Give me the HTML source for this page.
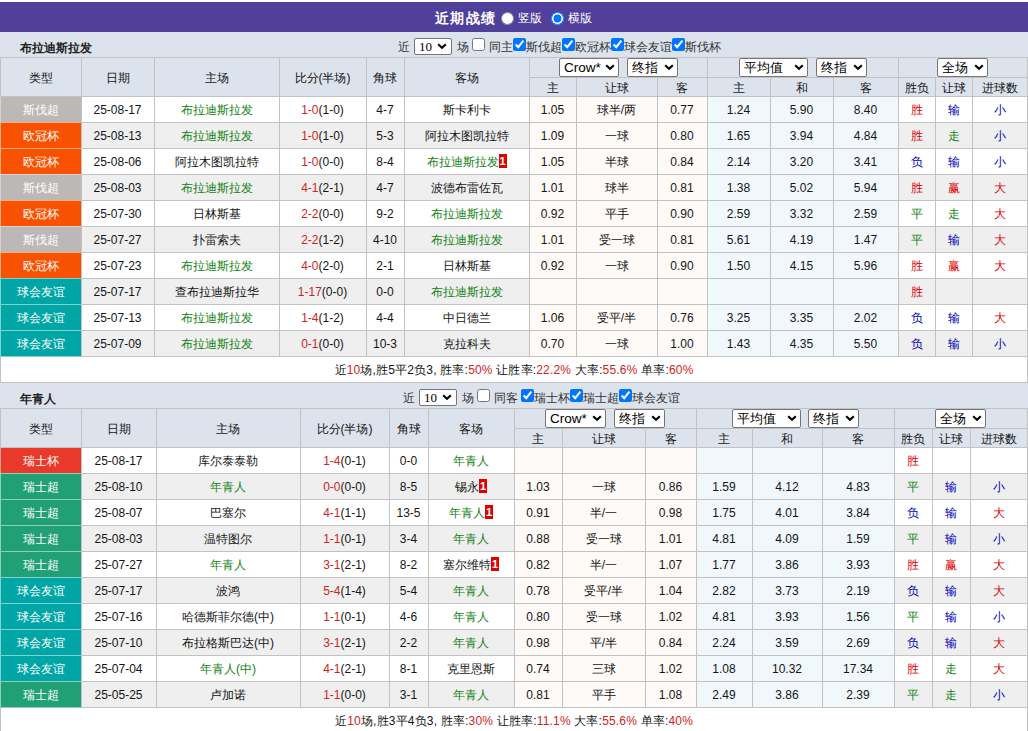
<!DOCTYPE html>
<html><head><meta charset="utf-8"><style>
html,body{margin:0;padding:0;background:#fff;width:1028px;height:731px;overflow:hidden;position:relative}
body *{position:absolute;box-sizing:border-box}
body{font-family:"Liberation Sans",sans-serif;font-size:12px;color:#333}
.t{text-align:center;white-space:nowrap;padding-top:1px}
.t span{position:static}
.t span.mk{position:relative;top:-2px}
.b{font-weight:bold}
.mk{position:static;display:inline-block;background:#e00000;color:#fff;font-weight:bold;width:8px;height:14px;line-height:14px;font-size:11px;text-align:center;vertical-align:middle}
.sel{background:#fff;border:1px solid #767676;border-radius:2px;color:#000}
.st{left:4px;top:0;white-space:nowrap}
input{margin:0;width:13px;height:13px}
</style></head><body>
<div style="left:0;top:2px;width:1028px;height:30px;background:#50409c"></div>
<div class="t b" style="left:435px;top:2px;height:30px;line-height:30px;font-size:14px;letter-spacing:1.3px;color:#fff;text-align:left">近期战绩</div>
<input type="radio" name="r" style="left:501px;top:12px;width:13px;height:13px">
<div class="t" style="left:518px;top:2px;height:30px;line-height:30px;color:#fff;text-align:left">竖版</div>
<input type="radio" name="r" checked style="left:551px;top:12px;width:13px;height:13px">
<div class="t" style="left:568px;top:2px;height:30px;line-height:30px;color:#fff;text-align:left">横版</div>
<div style="left:0px;top:32px;width:1028px;height:25px;background:#dce3ec;"></div>
<div class="t b" style="left:20px;top:35px;height:25px;line-height:25px;font-size:12px;color:#222;text-align:left">布拉迪斯拉发</div>
<div class="t" style="left:398px;top:39px;height:14px;line-height:14px;text-align:left;color:#333">近</div><div class="sel" style="left:414px;top:38px;width:38px;height:17px"><div class="st" style="top:0px;font-family:'Liberation Serif',serif;font-size:13px;line-height:15px">10</div><svg width="10" height="7" style="right:4px;top:4px"><polyline points="1.2,1.2 5,4.8 8.8,1.2" fill="none" stroke="#000" stroke-width="2.1"/></svg></div><div class="t" style="left:457px;top:39px;height:14px;line-height:14px;text-align:left;color:#333">场</div><input type="checkbox"  style="left:472px;top:38px"><div class="t" style="left:489px;top:39px;height:14px;line-height:14px;text-align:left;color:#333">同主</div><input type="checkbox" checked style="left:513px;top:38px"><div class="t" style="left:526px;top:39px;height:14px;line-height:14px;text-align:left;color:#333">斯伐超</div><input type="checkbox" checked style="left:562px;top:38px"><div class="t" style="left:575px;top:39px;height:14px;line-height:14px;text-align:left;color:#333">欧冠杯</div><input type="checkbox" checked style="left:611px;top:38px"><div class="t" style="left:624px;top:39px;height:14px;line-height:14px;text-align:left;color:#333">球会友谊</div><input type="checkbox" checked style="left:672px;top:38px"><div class="t" style="left:685px;top:39px;height:14px;line-height:14px;text-align:left;color:#333">斯伐杯</div>
<div style="left:0px;top:57px;width:1028px;height:39px;background:#dce3ec;"></div>
<div style="left:0px;top:96px;width:1028px;height:26px;background:#fff;"></div>
<div style="left:529px;top:96px;width:178px;height:26px;background:#fefaf7;"></div>
<div style="left:707px;top:96px;width:191px;height:26px;background:#f0f8fb;"></div>
<div style="left:0px;top:122px;width:1028px;height:26px;background:#efefef;"></div>
<div style="left:529px;top:122px;width:178px;height:26px;background:#fefaf7;"></div>
<div style="left:707px;top:122px;width:191px;height:26px;background:#f0f8fb;"></div>
<div style="left:0px;top:148px;width:1028px;height:26px;background:#fff;"></div>
<div style="left:529px;top:148px;width:178px;height:26px;background:#fefaf7;"></div>
<div style="left:707px;top:148px;width:191px;height:26px;background:#f0f8fb;"></div>
<div style="left:0px;top:174px;width:1028px;height:26px;background:#efefef;"></div>
<div style="left:529px;top:174px;width:178px;height:26px;background:#fefaf7;"></div>
<div style="left:707px;top:174px;width:191px;height:26px;background:#f0f8fb;"></div>
<div style="left:0px;top:200px;width:1028px;height:26px;background:#fff;"></div>
<div style="left:529px;top:200px;width:178px;height:26px;background:#fefaf7;"></div>
<div style="left:707px;top:200px;width:191px;height:26px;background:#f0f8fb;"></div>
<div style="left:0px;top:226px;width:1028px;height:26px;background:#efefef;"></div>
<div style="left:529px;top:226px;width:178px;height:26px;background:#fefaf7;"></div>
<div style="left:707px;top:226px;width:191px;height:26px;background:#f0f8fb;"></div>
<div style="left:0px;top:252px;width:1028px;height:26px;background:#fff;"></div>
<div style="left:529px;top:252px;width:178px;height:26px;background:#fefaf7;"></div>
<div style="left:707px;top:252px;width:191px;height:26px;background:#f0f8fb;"></div>
<div style="left:0px;top:278px;width:1028px;height:26px;background:#efefef;"></div>
<div style="left:529px;top:278px;width:178px;height:26px;background:#fefaf7;"></div>
<div style="left:707px;top:278px;width:191px;height:26px;background:#f0f8fb;"></div>
<div style="left:0px;top:304px;width:1028px;height:26px;background:#fff;"></div>
<div style="left:529px;top:304px;width:178px;height:26px;background:#fefaf7;"></div>
<div style="left:707px;top:304px;width:191px;height:26px;background:#f0f8fb;"></div>
<div style="left:0px;top:330px;width:1028px;height:26px;background:#efefef;"></div>
<div style="left:529px;top:330px;width:178px;height:26px;background:#fefaf7;"></div>
<div style="left:707px;top:330px;width:191px;height:26px;background:#f0f8fb;"></div>
<div style="left:0px;top:356px;width:1028px;height:26px;background:#fff;"></div>
<div style="left:0px;top:57px;width:1028px;height:1px;background:#c2c2c2;"></div>
<div style="left:529px;top:77px;width:499px;height:1px;background:#c2c2c2;"></div>
<div style="left:0px;top:96px;width:1028px;height:1px;background:#c2c2c2;"></div>
<div style="left:0px;top:122px;width:1028px;height:1px;background:#c2c2c2;"></div>
<div style="left:0px;top:148px;width:1028px;height:1px;background:#c2c2c2;"></div>
<div style="left:0px;top:174px;width:1028px;height:1px;background:#c2c2c2;"></div>
<div style="left:0px;top:200px;width:1028px;height:1px;background:#c2c2c2;"></div>
<div style="left:0px;top:226px;width:1028px;height:1px;background:#c2c2c2;"></div>
<div style="left:0px;top:252px;width:1028px;height:1px;background:#c2c2c2;"></div>
<div style="left:0px;top:278px;width:1028px;height:1px;background:#c2c2c2;"></div>
<div style="left:0px;top:304px;width:1028px;height:1px;background:#c2c2c2;"></div>
<div style="left:0px;top:330px;width:1028px;height:1px;background:#c2c2c2;"></div>
<div style="left:0px;top:356px;width:1028px;height:1px;background:#c2c2c2;"></div>
<div style="left:0px;top:382px;width:1028px;height:1px;background:#c2c2c2;"></div>
<div style="left:0px;top:57px;width:1px;height:299px;background:#c2c2c2;"></div>
<div style="left:81px;top:57px;width:1px;height:299px;background:#c2c2c2;"></div>
<div style="left:154px;top:57px;width:1px;height:299px;background:#c2c2c2;"></div>
<div style="left:279px;top:57px;width:1px;height:299px;background:#c2c2c2;"></div>
<div style="left:366px;top:57px;width:1px;height:299px;background:#c2c2c2;"></div>
<div style="left:404px;top:57px;width:1px;height:299px;background:#c2c2c2;"></div>
<div style="left:529px;top:57px;width:1px;height:299px;background:#c2c2c2;"></div>
<div style="left:576px;top:77px;width:1px;height:279px;background:#c2c2c2;"></div>
<div style="left:657px;top:77px;width:1px;height:279px;background:#c2c2c2;"></div>
<div style="left:707px;top:57px;width:1px;height:299px;background:#c2c2c2;"></div>
<div style="left:770px;top:77px;width:1px;height:279px;background:#c2c2c2;"></div>
<div style="left:833px;top:77px;width:1px;height:279px;background:#c2c2c2;"></div>
<div style="left:898px;top:57px;width:1px;height:299px;background:#c2c2c2;"></div>
<div style="left:935px;top:77px;width:1px;height:279px;background:#c2c2c2;"></div>
<div style="left:972px;top:77px;width:1px;height:279px;background:#c2c2c2;"></div>
<div style="left:1027px;top:57px;width:1px;height:299px;background:#c2c2c2;"></div>
<div style="left:0px;top:356px;width:1px;height:27px;background:#c2c2c2;"></div>
<div style="left:1027px;top:356px;width:1px;height:27px;background:#c2c2c2;"></div>
<div class="t" style="left:0px;top:58px;width:81px;height:38px;line-height:38px;color:#151515;font-size:12px;">类型</div>
<div class="t" style="left:81px;top:58px;width:73px;height:38px;line-height:38px;color:#151515;font-size:12px;">日期</div>
<div class="t" style="left:154px;top:58px;width:125px;height:38px;line-height:38px;color:#151515;font-size:12px;">主场</div>
<div class="t" style="left:279px;top:58px;width:87px;height:38px;line-height:38px;color:#151515;font-size:12px;">比分(半场)</div>
<div class="t" style="left:366px;top:58px;width:38px;height:38px;line-height:38px;color:#151515;font-size:12px;">角球</div>
<div class="t" style="left:404px;top:58px;width:125px;height:38px;line-height:38px;color:#151515;font-size:12px;">客场</div>
<div class="t" style="left:529px;top:78px;width:47px;height:18px;line-height:18px;color:#151515;font-size:12px;">主</div>
<div class="t" style="left:576px;top:78px;width:81px;height:18px;line-height:18px;color:#151515;font-size:12px;">让球</div>
<div class="t" style="left:657px;top:78px;width:50px;height:18px;line-height:18px;color:#151515;font-size:12px;">客</div>
<div class="t" style="left:707px;top:78px;width:63px;height:18px;line-height:18px;color:#151515;font-size:12px;">主</div>
<div class="t" style="left:770px;top:78px;width:63px;height:18px;line-height:18px;color:#151515;font-size:12px;">和</div>
<div class="t" style="left:833px;top:78px;width:65px;height:18px;line-height:18px;color:#151515;font-size:12px;">客</div>
<div class="t" style="left:898px;top:78px;width:37px;height:18px;line-height:18px;color:#151515;font-size:12px;">胜负</div>
<div class="t" style="left:935px;top:78px;width:37px;height:18px;line-height:18px;color:#151515;font-size:12px;">让球</div>
<div class="t" style="left:972px;top:78px;width:55px;height:18px;line-height:18px;color:#151515;font-size:12px;">进球数</div>
<div style="left:0px;top:97px;width:81px;height:26px;background:#d6d3d2;"></div>
<div style="left:1px;top:97px;width:80px;height:25px;background:#bcb8b6;"></div>
<div class="t" style="left:0px;top:97px;width:81px;height:25px;line-height:25px;color:#fff;font-size:12px;">斯伐超</div>
<div class="t" style="left:81px;top:97px;width:73px;height:25px;line-height:25px;color:#151515;font-size:12px;">25-08-17</div>
<div class="t" style="left:154px;top:97px;width:125px;height:25px;line-height:25px;color:#151515;font-size:12px;"><span style="color:#138313">布拉迪斯拉发</span></div>
<div class="t" style="left:279px;top:97px;width:87px;height:25px;line-height:25px;color:#151515;font-size:12px;"><span style="color:#d02424">1-0</span>(1-0)</div>
<div class="t" style="left:366px;top:97px;width:38px;height:25px;line-height:25px;color:#151515;font-size:12px;">4-7</div>
<div class="t" style="left:404px;top:97px;width:125px;height:25px;line-height:25px;color:#151515;font-size:12px;">斯卡利卡</div>
<div class="t" style="left:529px;top:97px;width:47px;height:25px;line-height:25px;color:#151515;font-size:12px;">1.05</div>
<div class="t" style="left:576px;top:97px;width:81px;height:25px;line-height:25px;color:#151515;font-size:12px;">球半/两</div>
<div class="t" style="left:657px;top:97px;width:50px;height:25px;line-height:25px;color:#151515;font-size:12px;">0.77</div>
<div class="t" style="left:707px;top:97px;width:63px;height:25px;line-height:25px;color:#151515;font-size:12px;">1.24</div>
<div class="t" style="left:770px;top:97px;width:63px;height:25px;line-height:25px;color:#151515;font-size:12px;">5.90</div>
<div class="t" style="left:833px;top:97px;width:65px;height:25px;line-height:25px;color:#151515;font-size:12px;">8.40</div>
<div class="t" style="left:898px;top:97px;width:37px;height:25px;line-height:25px;color:#151515;font-size:12px;"><span style="color:#dd0000">胜</span></div>
<div class="t" style="left:935px;top:97px;width:37px;height:25px;line-height:25px;color:#151515;font-size:12px;"><span style="color:#0000bb">输</span></div>
<div class="t" style="left:972px;top:97px;width:55px;height:25px;line-height:25px;color:#151515;font-size:12px;"><span style="color:#0000bb">小</span></div>
<div style="left:0px;top:122px;width:81px;height:27px;background:#fbac80;"></div>
<div style="left:1px;top:123px;width:80px;height:25px;background:#f85200;"></div>
<div class="t" style="left:0px;top:123px;width:81px;height:25px;line-height:25px;color:#fff;font-size:12px;">欧冠杯</div>
<div class="t" style="left:81px;top:123px;width:73px;height:25px;line-height:25px;color:#151515;font-size:12px;">25-08-13</div>
<div class="t" style="left:154px;top:123px;width:125px;height:25px;line-height:25px;color:#151515;font-size:12px;"><span style="color:#138313">布拉迪斯拉发</span></div>
<div class="t" style="left:279px;top:123px;width:87px;height:25px;line-height:25px;color:#151515;font-size:12px;"><span style="color:#d02424">1-0</span>(1-0)</div>
<div class="t" style="left:366px;top:123px;width:38px;height:25px;line-height:25px;color:#151515;font-size:12px;">5-3</div>
<div class="t" style="left:404px;top:123px;width:125px;height:25px;line-height:25px;color:#151515;font-size:12px;">阿拉木图凯拉特</div>
<div class="t" style="left:529px;top:123px;width:47px;height:25px;line-height:25px;color:#151515;font-size:12px;">1.09</div>
<div class="t" style="left:576px;top:123px;width:81px;height:25px;line-height:25px;color:#151515;font-size:12px;">一球</div>
<div class="t" style="left:657px;top:123px;width:50px;height:25px;line-height:25px;color:#151515;font-size:12px;">0.80</div>
<div class="t" style="left:707px;top:123px;width:63px;height:25px;line-height:25px;color:#151515;font-size:12px;">1.65</div>
<div class="t" style="left:770px;top:123px;width:63px;height:25px;line-height:25px;color:#151515;font-size:12px;">3.94</div>
<div class="t" style="left:833px;top:123px;width:65px;height:25px;line-height:25px;color:#151515;font-size:12px;">4.84</div>
<div class="t" style="left:898px;top:123px;width:37px;height:25px;line-height:25px;color:#151515;font-size:12px;"><span style="color:#dd0000">胜</span></div>
<div class="t" style="left:935px;top:123px;width:37px;height:25px;line-height:25px;color:#151515;font-size:12px;"><span style="color:#138313">走</span></div>
<div class="t" style="left:972px;top:123px;width:55px;height:25px;line-height:25px;color:#151515;font-size:12px;"><span style="color:#0000bb">小</span></div>
<div style="left:0px;top:148px;width:81px;height:27px;background:#fbac80;"></div>
<div style="left:1px;top:149px;width:80px;height:25px;background:#f85200;"></div>
<div class="t" style="left:0px;top:149px;width:81px;height:25px;line-height:25px;color:#fff;font-size:12px;">欧冠杯</div>
<div class="t" style="left:81px;top:149px;width:73px;height:25px;line-height:25px;color:#151515;font-size:12px;">25-08-06</div>
<div class="t" style="left:154px;top:149px;width:125px;height:25px;line-height:25px;color:#151515;font-size:12px;">阿拉木图凯拉特</div>
<div class="t" style="left:279px;top:149px;width:87px;height:25px;line-height:25px;color:#151515;font-size:12px;"><span style="color:#d02424">1-0</span>(0-0)</div>
<div class="t" style="left:366px;top:149px;width:38px;height:25px;line-height:25px;color:#151515;font-size:12px;">8-4</div>
<div class="t" style="left:404px;top:149px;width:125px;height:25px;line-height:25px;color:#151515;font-size:12px;"><span style="color:#138313">布拉迪斯拉发</span><span class="mk">1</span></div>
<div class="t" style="left:529px;top:149px;width:47px;height:25px;line-height:25px;color:#151515;font-size:12px;">1.05</div>
<div class="t" style="left:576px;top:149px;width:81px;height:25px;line-height:25px;color:#151515;font-size:12px;">半球</div>
<div class="t" style="left:657px;top:149px;width:50px;height:25px;line-height:25px;color:#151515;font-size:12px;">0.84</div>
<div class="t" style="left:707px;top:149px;width:63px;height:25px;line-height:25px;color:#151515;font-size:12px;">2.14</div>
<div class="t" style="left:770px;top:149px;width:63px;height:25px;line-height:25px;color:#151515;font-size:12px;">3.20</div>
<div class="t" style="left:833px;top:149px;width:65px;height:25px;line-height:25px;color:#151515;font-size:12px;">3.41</div>
<div class="t" style="left:898px;top:149px;width:37px;height:25px;line-height:25px;color:#151515;font-size:12px;"><span style="color:#0000bb">负</span></div>
<div class="t" style="left:935px;top:149px;width:37px;height:25px;line-height:25px;color:#151515;font-size:12px;"><span style="color:#0000bb">输</span></div>
<div class="t" style="left:972px;top:149px;width:55px;height:25px;line-height:25px;color:#151515;font-size:12px;"><span style="color:#0000bb">小</span></div>
<div style="left:0px;top:174px;width:81px;height:27px;background:#d6d3d2;"></div>
<div style="left:1px;top:175px;width:80px;height:25px;background:#bcb8b6;"></div>
<div class="t" style="left:0px;top:175px;width:81px;height:25px;line-height:25px;color:#fff;font-size:12px;">斯伐超</div>
<div class="t" style="left:81px;top:175px;width:73px;height:25px;line-height:25px;color:#151515;font-size:12px;">25-08-03</div>
<div class="t" style="left:154px;top:175px;width:125px;height:25px;line-height:25px;color:#151515;font-size:12px;"><span style="color:#138313">布拉迪斯拉发</span></div>
<div class="t" style="left:279px;top:175px;width:87px;height:25px;line-height:25px;color:#151515;font-size:12px;"><span style="color:#d02424">4-1</span>(2-1)</div>
<div class="t" style="left:366px;top:175px;width:38px;height:25px;line-height:25px;color:#151515;font-size:12px;">4-7</div>
<div class="t" style="left:404px;top:175px;width:125px;height:25px;line-height:25px;color:#151515;font-size:12px;">波德布雷佐瓦</div>
<div class="t" style="left:529px;top:175px;width:47px;height:25px;line-height:25px;color:#151515;font-size:12px;">1.01</div>
<div class="t" style="left:576px;top:175px;width:81px;height:25px;line-height:25px;color:#151515;font-size:12px;">球半</div>
<div class="t" style="left:657px;top:175px;width:50px;height:25px;line-height:25px;color:#151515;font-size:12px;">0.81</div>
<div class="t" style="left:707px;top:175px;width:63px;height:25px;line-height:25px;color:#151515;font-size:12px;">1.38</div>
<div class="t" style="left:770px;top:175px;width:63px;height:25px;line-height:25px;color:#151515;font-size:12px;">5.02</div>
<div class="t" style="left:833px;top:175px;width:65px;height:25px;line-height:25px;color:#151515;font-size:12px;">5.94</div>
<div class="t" style="left:898px;top:175px;width:37px;height:25px;line-height:25px;color:#151515;font-size:12px;"><span style="color:#dd0000">胜</span></div>
<div class="t" style="left:935px;top:175px;width:37px;height:25px;line-height:25px;color:#151515;font-size:12px;"><span style="color:#dd0000">赢</span></div>
<div class="t" style="left:972px;top:175px;width:55px;height:25px;line-height:25px;color:#151515;font-size:12px;"><span style="color:#dd0000">大</span></div>
<div style="left:0px;top:200px;width:81px;height:27px;background:#fbac80;"></div>
<div style="left:1px;top:201px;width:80px;height:25px;background:#f85200;"></div>
<div class="t" style="left:0px;top:201px;width:81px;height:25px;line-height:25px;color:#fff;font-size:12px;">欧冠杯</div>
<div class="t" style="left:81px;top:201px;width:73px;height:25px;line-height:25px;color:#151515;font-size:12px;">25-07-30</div>
<div class="t" style="left:154px;top:201px;width:125px;height:25px;line-height:25px;color:#151515;font-size:12px;">日林斯基</div>
<div class="t" style="left:279px;top:201px;width:87px;height:25px;line-height:25px;color:#151515;font-size:12px;"><span style="color:#d02424">2-2</span>(0-0)</div>
<div class="t" style="left:366px;top:201px;width:38px;height:25px;line-height:25px;color:#151515;font-size:12px;">9-2</div>
<div class="t" style="left:404px;top:201px;width:125px;height:25px;line-height:25px;color:#151515;font-size:12px;"><span style="color:#138313">布拉迪斯拉发</span></div>
<div class="t" style="left:529px;top:201px;width:47px;height:25px;line-height:25px;color:#151515;font-size:12px;">0.92</div>
<div class="t" style="left:576px;top:201px;width:81px;height:25px;line-height:25px;color:#151515;font-size:12px;">平手</div>
<div class="t" style="left:657px;top:201px;width:50px;height:25px;line-height:25px;color:#151515;font-size:12px;">0.90</div>
<div class="t" style="left:707px;top:201px;width:63px;height:25px;line-height:25px;color:#151515;font-size:12px;">2.59</div>
<div class="t" style="left:770px;top:201px;width:63px;height:25px;line-height:25px;color:#151515;font-size:12px;">3.32</div>
<div class="t" style="left:833px;top:201px;width:65px;height:25px;line-height:25px;color:#151515;font-size:12px;">2.59</div>
<div class="t" style="left:898px;top:201px;width:37px;height:25px;line-height:25px;color:#151515;font-size:12px;"><span style="color:#138313">平</span></div>
<div class="t" style="left:935px;top:201px;width:37px;height:25px;line-height:25px;color:#151515;font-size:12px;"><span style="color:#138313">走</span></div>
<div class="t" style="left:972px;top:201px;width:55px;height:25px;line-height:25px;color:#151515;font-size:12px;"><span style="color:#dd0000">大</span></div>
<div style="left:0px;top:226px;width:81px;height:27px;background:#d6d3d2;"></div>
<div style="left:1px;top:227px;width:80px;height:25px;background:#bcb8b6;"></div>
<div class="t" style="left:0px;top:227px;width:81px;height:25px;line-height:25px;color:#fff;font-size:12px;">斯伐超</div>
<div class="t" style="left:81px;top:227px;width:73px;height:25px;line-height:25px;color:#151515;font-size:12px;">25-07-27</div>
<div class="t" style="left:154px;top:227px;width:125px;height:25px;line-height:25px;color:#151515;font-size:12px;">扑雷索夫</div>
<div class="t" style="left:279px;top:227px;width:87px;height:25px;line-height:25px;color:#151515;font-size:12px;"><span style="color:#d02424">2-2</span>(1-2)</div>
<div class="t" style="left:366px;top:227px;width:38px;height:25px;line-height:25px;color:#151515;font-size:12px;">4-10</div>
<div class="t" style="left:404px;top:227px;width:125px;height:25px;line-height:25px;color:#151515;font-size:12px;"><span style="color:#138313">布拉迪斯拉发</span></div>
<div class="t" style="left:529px;top:227px;width:47px;height:25px;line-height:25px;color:#151515;font-size:12px;">1.01</div>
<div class="t" style="left:576px;top:227px;width:81px;height:25px;line-height:25px;color:#151515;font-size:12px;">受一球</div>
<div class="t" style="left:657px;top:227px;width:50px;height:25px;line-height:25px;color:#151515;font-size:12px;">0.81</div>
<div class="t" style="left:707px;top:227px;width:63px;height:25px;line-height:25px;color:#151515;font-size:12px;">5.61</div>
<div class="t" style="left:770px;top:227px;width:63px;height:25px;line-height:25px;color:#151515;font-size:12px;">4.19</div>
<div class="t" style="left:833px;top:227px;width:65px;height:25px;line-height:25px;color:#151515;font-size:12px;">1.47</div>
<div class="t" style="left:898px;top:227px;width:37px;height:25px;line-height:25px;color:#151515;font-size:12px;"><span style="color:#138313">平</span></div>
<div class="t" style="left:935px;top:227px;width:37px;height:25px;line-height:25px;color:#151515;font-size:12px;"><span style="color:#0000bb">输</span></div>
<div class="t" style="left:972px;top:227px;width:55px;height:25px;line-height:25px;color:#151515;font-size:12px;"><span style="color:#dd0000">大</span></div>
<div style="left:0px;top:252px;width:81px;height:27px;background:#fbac80;"></div>
<div style="left:1px;top:253px;width:80px;height:25px;background:#f85200;"></div>
<div class="t" style="left:0px;top:253px;width:81px;height:25px;line-height:25px;color:#fff;font-size:12px;">欧冠杯</div>
<div class="t" style="left:81px;top:253px;width:73px;height:25px;line-height:25px;color:#151515;font-size:12px;">25-07-23</div>
<div class="t" style="left:154px;top:253px;width:125px;height:25px;line-height:25px;color:#151515;font-size:12px;"><span style="color:#138313">布拉迪斯拉发</span></div>
<div class="t" style="left:279px;top:253px;width:87px;height:25px;line-height:25px;color:#151515;font-size:12px;"><span style="color:#d02424">4-0</span>(2-0)</div>
<div class="t" style="left:366px;top:253px;width:38px;height:25px;line-height:25px;color:#151515;font-size:12px;">2-1</div>
<div class="t" style="left:404px;top:253px;width:125px;height:25px;line-height:25px;color:#151515;font-size:12px;">日林斯基</div>
<div class="t" style="left:529px;top:253px;width:47px;height:25px;line-height:25px;color:#151515;font-size:12px;">0.92</div>
<div class="t" style="left:576px;top:253px;width:81px;height:25px;line-height:25px;color:#151515;font-size:12px;">一球</div>
<div class="t" style="left:657px;top:253px;width:50px;height:25px;line-height:25px;color:#151515;font-size:12px;">0.90</div>
<div class="t" style="left:707px;top:253px;width:63px;height:25px;line-height:25px;color:#151515;font-size:12px;">1.50</div>
<div class="t" style="left:770px;top:253px;width:63px;height:25px;line-height:25px;color:#151515;font-size:12px;">4.15</div>
<div class="t" style="left:833px;top:253px;width:65px;height:25px;line-height:25px;color:#151515;font-size:12px;">5.96</div>
<div class="t" style="left:898px;top:253px;width:37px;height:25px;line-height:25px;color:#151515;font-size:12px;"><span style="color:#dd0000">胜</span></div>
<div class="t" style="left:935px;top:253px;width:37px;height:25px;line-height:25px;color:#151515;font-size:12px;"><span style="color:#dd0000">赢</span></div>
<div class="t" style="left:972px;top:253px;width:55px;height:25px;line-height:25px;color:#151515;font-size:12px;"><span style="color:#dd0000">大</span></div>
<div style="left:0px;top:278px;width:81px;height:27px;background:#80d2d2;"></div>
<div style="left:1px;top:279px;width:80px;height:25px;background:#00a5a5;"></div>
<div class="t" style="left:0px;top:279px;width:81px;height:25px;line-height:25px;color:#fff;font-size:12px;">球会友谊</div>
<div class="t" style="left:81px;top:279px;width:73px;height:25px;line-height:25px;color:#151515;font-size:12px;">25-07-17</div>
<div class="t" style="left:154px;top:279px;width:125px;height:25px;line-height:25px;color:#151515;font-size:12px;">查布拉迪斯拉华</div>
<div class="t" style="left:279px;top:279px;width:87px;height:25px;line-height:25px;color:#151515;font-size:12px;"><span style="color:#d02424">1-17</span>(0-0)</div>
<div class="t" style="left:366px;top:279px;width:38px;height:25px;line-height:25px;color:#151515;font-size:12px;">0-0</div>
<div class="t" style="left:404px;top:279px;width:125px;height:25px;line-height:25px;color:#151515;font-size:12px;"><span style="color:#138313">布拉迪斯拉发</span></div>
<div class="t" style="left:898px;top:279px;width:37px;height:25px;line-height:25px;color:#151515;font-size:12px;"><span style="color:#dd0000">胜</span></div>
<div style="left:0px;top:304px;width:81px;height:27px;background:#80d2d2;"></div>
<div style="left:1px;top:305px;width:80px;height:25px;background:#00a5a5;"></div>
<div class="t" style="left:0px;top:305px;width:81px;height:25px;line-height:25px;color:#fff;font-size:12px;">球会友谊</div>
<div class="t" style="left:81px;top:305px;width:73px;height:25px;line-height:25px;color:#151515;font-size:12px;">25-07-13</div>
<div class="t" style="left:154px;top:305px;width:125px;height:25px;line-height:25px;color:#151515;font-size:12px;"><span style="color:#138313">布拉迪斯拉发</span></div>
<div class="t" style="left:279px;top:305px;width:87px;height:25px;line-height:25px;color:#151515;font-size:12px;"><span style="color:#d02424">1-4</span>(1-2)</div>
<div class="t" style="left:366px;top:305px;width:38px;height:25px;line-height:25px;color:#151515;font-size:12px;">4-4</div>
<div class="t" style="left:404px;top:305px;width:125px;height:25px;line-height:25px;color:#151515;font-size:12px;">中日德兰</div>
<div class="t" style="left:529px;top:305px;width:47px;height:25px;line-height:25px;color:#151515;font-size:12px;">1.06</div>
<div class="t" style="left:576px;top:305px;width:81px;height:25px;line-height:25px;color:#151515;font-size:12px;">受平/半</div>
<div class="t" style="left:657px;top:305px;width:50px;height:25px;line-height:25px;color:#151515;font-size:12px;">0.76</div>
<div class="t" style="left:707px;top:305px;width:63px;height:25px;line-height:25px;color:#151515;font-size:12px;">3.25</div>
<div class="t" style="left:770px;top:305px;width:63px;height:25px;line-height:25px;color:#151515;font-size:12px;">3.35</div>
<div class="t" style="left:833px;top:305px;width:65px;height:25px;line-height:25px;color:#151515;font-size:12px;">2.02</div>
<div class="t" style="left:898px;top:305px;width:37px;height:25px;line-height:25px;color:#151515;font-size:12px;"><span style="color:#0000bb">负</span></div>
<div class="t" style="left:935px;top:305px;width:37px;height:25px;line-height:25px;color:#151515;font-size:12px;"><span style="color:#0000bb">输</span></div>
<div class="t" style="left:972px;top:305px;width:55px;height:25px;line-height:25px;color:#151515;font-size:12px;"><span style="color:#dd0000">大</span></div>
<div style="left:0px;top:330px;width:81px;height:27px;background:#80d2d2;"></div>
<div style="left:1px;top:331px;width:80px;height:25px;background:#00a5a5;"></div>
<div class="t" style="left:0px;top:331px;width:81px;height:25px;line-height:25px;color:#fff;font-size:12px;">球会友谊</div>
<div class="t" style="left:81px;top:331px;width:73px;height:25px;line-height:25px;color:#151515;font-size:12px;">25-07-09</div>
<div class="t" style="left:154px;top:331px;width:125px;height:25px;line-height:25px;color:#151515;font-size:12px;"><span style="color:#138313">布拉迪斯拉发</span></div>
<div class="t" style="left:279px;top:331px;width:87px;height:25px;line-height:25px;color:#151515;font-size:12px;"><span style="color:#d02424">0-1</span>(0-0)</div>
<div class="t" style="left:366px;top:331px;width:38px;height:25px;line-height:25px;color:#151515;font-size:12px;">10-3</div>
<div class="t" style="left:404px;top:331px;width:125px;height:25px;line-height:25px;color:#151515;font-size:12px;">克拉科夫</div>
<div class="t" style="left:529px;top:331px;width:47px;height:25px;line-height:25px;color:#151515;font-size:12px;">0.70</div>
<div class="t" style="left:576px;top:331px;width:81px;height:25px;line-height:25px;color:#151515;font-size:12px;">一球</div>
<div class="t" style="left:657px;top:331px;width:50px;height:25px;line-height:25px;color:#151515;font-size:12px;">1.00</div>
<div class="t" style="left:707px;top:331px;width:63px;height:25px;line-height:25px;color:#151515;font-size:12px;">1.43</div>
<div class="t" style="left:770px;top:331px;width:63px;height:25px;line-height:25px;color:#151515;font-size:12px;">4.35</div>
<div class="t" style="left:833px;top:331px;width:65px;height:25px;line-height:25px;color:#151515;font-size:12px;">5.50</div>
<div class="t" style="left:898px;top:331px;width:37px;height:25px;line-height:25px;color:#151515;font-size:12px;"><span style="color:#0000bb">负</span></div>
<div class="t" style="left:935px;top:331px;width:37px;height:25px;line-height:25px;color:#151515;font-size:12px;"><span style="color:#0000bb">输</span></div>
<div class="t" style="left:972px;top:331px;width:55px;height:25px;line-height:25px;color:#151515;font-size:12px;"><span style="color:#0000bb">小</span></div>
<div class="t" style="left:0px;top:357px;width:1028px;height:25px;line-height:25px;color:#151515;font-size:12px;letter-spacing:0.18px">近<span style="color:#d02424">10</span>场,胜5平2负3, 胜率:<span style="color:#d02424">50%</span> 让胜率:<span style="color:#d02424">22.2%</span> 大率:<span style="color:#d02424">55.6%</span> 单率:<span style="color:#d02424">60%</span></div>
<div style="left:0px;top:383px;width:1028px;height:25px;background:#dce3ec;"></div>
<div class="t b" style="left:20px;top:386px;height:25px;line-height:25px;font-size:12px;color:#222;text-align:left">年青人</div>
<div class="t" style="left:403px;top:390px;height:14px;line-height:14px;text-align:left;color:#333">近</div><div class="sel" style="left:419px;top:389px;width:38px;height:17px"><div class="st" style="top:0px;font-family:'Liberation Serif',serif;font-size:13px;line-height:15px">10</div><svg width="10" height="7" style="right:4px;top:4px"><polyline points="1.2,1.2 5,4.8 8.8,1.2" fill="none" stroke="#000" stroke-width="2.1"/></svg></div><div class="t" style="left:462px;top:390px;height:14px;line-height:14px;text-align:left;color:#333">场</div><input type="checkbox"  style="left:477px;top:389px"><div class="t" style="left:494px;top:390px;height:14px;line-height:14px;text-align:left;color:#333">同客</div><input type="checkbox" checked style="left:521px;top:389px"><div class="t" style="left:534px;top:390px;height:14px;line-height:14px;text-align:left;color:#333">瑞士杯</div><input type="checkbox" checked style="left:570px;top:389px"><div class="t" style="left:583px;top:390px;height:14px;line-height:14px;text-align:left;color:#333">瑞士超</div><input type="checkbox" checked style="left:619px;top:389px"><div class="t" style="left:632px;top:390px;height:14px;line-height:14px;text-align:left;color:#333">球会友谊</div>
<div style="left:0px;top:408px;width:1028px;height:39px;background:#dce3ec;"></div>
<div style="left:0px;top:447px;width:1028px;height:26px;background:#fff;"></div>
<div style="left:514px;top:447px;width:182px;height:26px;background:#fefaf7;"></div>
<div style="left:696px;top:447px;width:198px;height:26px;background:#f0f8fb;"></div>
<div style="left:0px;top:473px;width:1028px;height:26px;background:#efefef;"></div>
<div style="left:514px;top:473px;width:182px;height:26px;background:#fefaf7;"></div>
<div style="left:696px;top:473px;width:198px;height:26px;background:#f0f8fb;"></div>
<div style="left:0px;top:499px;width:1028px;height:26px;background:#fff;"></div>
<div style="left:514px;top:499px;width:182px;height:26px;background:#fefaf7;"></div>
<div style="left:696px;top:499px;width:198px;height:26px;background:#f0f8fb;"></div>
<div style="left:0px;top:525px;width:1028px;height:26px;background:#efefef;"></div>
<div style="left:514px;top:525px;width:182px;height:26px;background:#fefaf7;"></div>
<div style="left:696px;top:525px;width:198px;height:26px;background:#f0f8fb;"></div>
<div style="left:0px;top:551px;width:1028px;height:26px;background:#fff;"></div>
<div style="left:514px;top:551px;width:182px;height:26px;background:#fefaf7;"></div>
<div style="left:696px;top:551px;width:198px;height:26px;background:#f0f8fb;"></div>
<div style="left:0px;top:577px;width:1028px;height:26px;background:#efefef;"></div>
<div style="left:514px;top:577px;width:182px;height:26px;background:#fefaf7;"></div>
<div style="left:696px;top:577px;width:198px;height:26px;background:#f0f8fb;"></div>
<div style="left:0px;top:603px;width:1028px;height:26px;background:#fff;"></div>
<div style="left:514px;top:603px;width:182px;height:26px;background:#fefaf7;"></div>
<div style="left:696px;top:603px;width:198px;height:26px;background:#f0f8fb;"></div>
<div style="left:0px;top:629px;width:1028px;height:26px;background:#efefef;"></div>
<div style="left:514px;top:629px;width:182px;height:26px;background:#fefaf7;"></div>
<div style="left:696px;top:629px;width:198px;height:26px;background:#f0f8fb;"></div>
<div style="left:0px;top:655px;width:1028px;height:26px;background:#fff;"></div>
<div style="left:514px;top:655px;width:182px;height:26px;background:#fefaf7;"></div>
<div style="left:696px;top:655px;width:198px;height:26px;background:#f0f8fb;"></div>
<div style="left:0px;top:681px;width:1028px;height:26px;background:#efefef;"></div>
<div style="left:514px;top:681px;width:182px;height:26px;background:#fefaf7;"></div>
<div style="left:696px;top:681px;width:198px;height:26px;background:#f0f8fb;"></div>
<div style="left:0px;top:707px;width:1028px;height:26px;background:#fff;"></div>
<div style="left:0px;top:408px;width:1028px;height:1px;background:#c2c2c2;"></div>
<div style="left:514px;top:428px;width:514px;height:1px;background:#c2c2c2;"></div>
<div style="left:0px;top:447px;width:1028px;height:1px;background:#c2c2c2;"></div>
<div style="left:0px;top:473px;width:1028px;height:1px;background:#c2c2c2;"></div>
<div style="left:0px;top:499px;width:1028px;height:1px;background:#c2c2c2;"></div>
<div style="left:0px;top:525px;width:1028px;height:1px;background:#c2c2c2;"></div>
<div style="left:0px;top:551px;width:1028px;height:1px;background:#c2c2c2;"></div>
<div style="left:0px;top:577px;width:1028px;height:1px;background:#c2c2c2;"></div>
<div style="left:0px;top:603px;width:1028px;height:1px;background:#c2c2c2;"></div>
<div style="left:0px;top:629px;width:1028px;height:1px;background:#c2c2c2;"></div>
<div style="left:0px;top:655px;width:1028px;height:1px;background:#c2c2c2;"></div>
<div style="left:0px;top:681px;width:1028px;height:1px;background:#c2c2c2;"></div>
<div style="left:0px;top:707px;width:1028px;height:1px;background:#c2c2c2;"></div>
<div style="left:0px;top:733px;width:1028px;height:1px;background:#c2c2c2;"></div>
<div style="left:0px;top:408px;width:1px;height:299px;background:#c2c2c2;"></div>
<div style="left:81px;top:408px;width:1px;height:299px;background:#c2c2c2;"></div>
<div style="left:156px;top:408px;width:1px;height:299px;background:#c2c2c2;"></div>
<div style="left:300px;top:408px;width:1px;height:299px;background:#c2c2c2;"></div>
<div style="left:389px;top:408px;width:1px;height:299px;background:#c2c2c2;"></div>
<div style="left:428px;top:408px;width:1px;height:299px;background:#c2c2c2;"></div>
<div style="left:514px;top:408px;width:1px;height:299px;background:#c2c2c2;"></div>
<div style="left:562px;top:428px;width:1px;height:279px;background:#c2c2c2;"></div>
<div style="left:645px;top:428px;width:1px;height:279px;background:#c2c2c2;"></div>
<div style="left:696px;top:408px;width:1px;height:299px;background:#c2c2c2;"></div>
<div style="left:752px;top:428px;width:1px;height:279px;background:#c2c2c2;"></div>
<div style="left:822px;top:428px;width:1px;height:279px;background:#c2c2c2;"></div>
<div style="left:894px;top:408px;width:1px;height:299px;background:#c2c2c2;"></div>
<div style="left:932px;top:428px;width:1px;height:279px;background:#c2c2c2;"></div>
<div style="left:970px;top:428px;width:1px;height:279px;background:#c2c2c2;"></div>
<div style="left:1027px;top:408px;width:1px;height:299px;background:#c2c2c2;"></div>
<div style="left:0px;top:707px;width:1px;height:27px;background:#c2c2c2;"></div>
<div style="left:1027px;top:707px;width:1px;height:27px;background:#c2c2c2;"></div>
<div class="t" style="left:0px;top:409px;width:81px;height:38px;line-height:38px;color:#151515;font-size:12px;">类型</div>
<div class="t" style="left:81px;top:409px;width:75px;height:38px;line-height:38px;color:#151515;font-size:12px;">日期</div>
<div class="t" style="left:156px;top:409px;width:144px;height:38px;line-height:38px;color:#151515;font-size:12px;">主场</div>
<div class="t" style="left:300px;top:409px;width:89px;height:38px;line-height:38px;color:#151515;font-size:12px;">比分(半场)</div>
<div class="t" style="left:389px;top:409px;width:39px;height:38px;line-height:38px;color:#151515;font-size:12px;">角球</div>
<div class="t" style="left:428px;top:409px;width:86px;height:38px;line-height:38px;color:#151515;font-size:12px;">客场</div>
<div class="t" style="left:514px;top:429px;width:48px;height:18px;line-height:18px;color:#151515;font-size:12px;">主</div>
<div class="t" style="left:562px;top:429px;width:83px;height:18px;line-height:18px;color:#151515;font-size:12px;">让球</div>
<div class="t" style="left:645px;top:429px;width:51px;height:18px;line-height:18px;color:#151515;font-size:12px;">客</div>
<div class="t" style="left:696px;top:429px;width:56px;height:18px;line-height:18px;color:#151515;font-size:12px;">主</div>
<div class="t" style="left:752px;top:429px;width:70px;height:18px;line-height:18px;color:#151515;font-size:12px;">和</div>
<div class="t" style="left:822px;top:429px;width:72px;height:18px;line-height:18px;color:#151515;font-size:12px;">客</div>
<div class="t" style="left:894px;top:429px;width:38px;height:18px;line-height:18px;color:#151515;font-size:12px;">胜负</div>
<div class="t" style="left:932px;top:429px;width:38px;height:18px;line-height:18px;color:#151515;font-size:12px;">让球</div>
<div class="t" style="left:970px;top:429px;width:57px;height:18px;line-height:18px;color:#151515;font-size:12px;">进球数</div>
<div style="left:0px;top:448px;width:81px;height:26px;background:#f39c94;"></div>
<div style="left:1px;top:448px;width:80px;height:25px;background:#e8392a;"></div>
<div class="t" style="left:0px;top:448px;width:81px;height:25px;line-height:25px;color:#fff;font-size:12px;">瑞士杯</div>
<div class="t" style="left:81px;top:448px;width:75px;height:25px;line-height:25px;color:#151515;font-size:12px;">25-08-17</div>
<div class="t" style="left:156px;top:448px;width:144px;height:25px;line-height:25px;color:#151515;font-size:12px;">库尔泰泰勒</div>
<div class="t" style="left:300px;top:448px;width:89px;height:25px;line-height:25px;color:#151515;font-size:12px;"><span style="color:#d02424">1-4</span>(0-1)</div>
<div class="t" style="left:389px;top:448px;width:39px;height:25px;line-height:25px;color:#151515;font-size:12px;">0-0</div>
<div class="t" style="left:428px;top:448px;width:86px;height:25px;line-height:25px;color:#151515;font-size:12px;"><span style="color:#138313">年青人</span></div>
<div class="t" style="left:894px;top:448px;width:38px;height:25px;line-height:25px;color:#151515;font-size:12px;"><span style="color:#dd0000">胜</span></div>
<div style="left:0px;top:473px;width:81px;height:27px;background:#91cfb6;"></div>
<div style="left:1px;top:474px;width:80px;height:25px;background:#21a075;"></div>
<div class="t" style="left:0px;top:474px;width:81px;height:25px;line-height:25px;color:#fff;font-size:12px;">瑞士超</div>
<div class="t" style="left:81px;top:474px;width:75px;height:25px;line-height:25px;color:#151515;font-size:12px;">25-08-10</div>
<div class="t" style="left:156px;top:474px;width:144px;height:25px;line-height:25px;color:#151515;font-size:12px;"><span style="color:#138313">年青人</span></div>
<div class="t" style="left:300px;top:474px;width:89px;height:25px;line-height:25px;color:#151515;font-size:12px;"><span style="color:#d02424">0-0</span>(0-0)</div>
<div class="t" style="left:389px;top:474px;width:39px;height:25px;line-height:25px;color:#151515;font-size:12px;">8-5</div>
<div class="t" style="left:428px;top:474px;width:86px;height:25px;line-height:25px;color:#151515;font-size:12px;">锡永<span class="mk">1</span></div>
<div class="t" style="left:514px;top:474px;width:48px;height:25px;line-height:25px;color:#151515;font-size:12px;">1.03</div>
<div class="t" style="left:562px;top:474px;width:83px;height:25px;line-height:25px;color:#151515;font-size:12px;">一球</div>
<div class="t" style="left:645px;top:474px;width:51px;height:25px;line-height:25px;color:#151515;font-size:12px;">0.86</div>
<div class="t" style="left:696px;top:474px;width:56px;height:25px;line-height:25px;color:#151515;font-size:12px;">1.59</div>
<div class="t" style="left:752px;top:474px;width:70px;height:25px;line-height:25px;color:#151515;font-size:12px;">4.12</div>
<div class="t" style="left:822px;top:474px;width:72px;height:25px;line-height:25px;color:#151515;font-size:12px;">4.83</div>
<div class="t" style="left:894px;top:474px;width:38px;height:25px;line-height:25px;color:#151515;font-size:12px;"><span style="color:#138313">平</span></div>
<div class="t" style="left:932px;top:474px;width:38px;height:25px;line-height:25px;color:#151515;font-size:12px;"><span style="color:#0000bb">输</span></div>
<div class="t" style="left:970px;top:474px;width:57px;height:25px;line-height:25px;color:#151515;font-size:12px;"><span style="color:#0000bb">小</span></div>
<div style="left:0px;top:499px;width:81px;height:27px;background:#91cfb6;"></div>
<div style="left:1px;top:500px;width:80px;height:25px;background:#21a075;"></div>
<div class="t" style="left:0px;top:500px;width:81px;height:25px;line-height:25px;color:#fff;font-size:12px;">瑞士超</div>
<div class="t" style="left:81px;top:500px;width:75px;height:25px;line-height:25px;color:#151515;font-size:12px;">25-08-07</div>
<div class="t" style="left:156px;top:500px;width:144px;height:25px;line-height:25px;color:#151515;font-size:12px;">巴塞尔</div>
<div class="t" style="left:300px;top:500px;width:89px;height:25px;line-height:25px;color:#151515;font-size:12px;"><span style="color:#d02424">4-1</span>(1-1)</div>
<div class="t" style="left:389px;top:500px;width:39px;height:25px;line-height:25px;color:#151515;font-size:12px;">13-5</div>
<div class="t" style="left:428px;top:500px;width:86px;height:25px;line-height:25px;color:#151515;font-size:12px;"><span style="color:#138313">年青人</span><span class="mk">1</span></div>
<div class="t" style="left:514px;top:500px;width:48px;height:25px;line-height:25px;color:#151515;font-size:12px;">0.91</div>
<div class="t" style="left:562px;top:500px;width:83px;height:25px;line-height:25px;color:#151515;font-size:12px;">半/一</div>
<div class="t" style="left:645px;top:500px;width:51px;height:25px;line-height:25px;color:#151515;font-size:12px;">0.98</div>
<div class="t" style="left:696px;top:500px;width:56px;height:25px;line-height:25px;color:#151515;font-size:12px;">1.75</div>
<div class="t" style="left:752px;top:500px;width:70px;height:25px;line-height:25px;color:#151515;font-size:12px;">4.01</div>
<div class="t" style="left:822px;top:500px;width:72px;height:25px;line-height:25px;color:#151515;font-size:12px;">3.84</div>
<div class="t" style="left:894px;top:500px;width:38px;height:25px;line-height:25px;color:#151515;font-size:12px;"><span style="color:#0000bb">负</span></div>
<div class="t" style="left:932px;top:500px;width:38px;height:25px;line-height:25px;color:#151515;font-size:12px;"><span style="color:#0000bb">输</span></div>
<div class="t" style="left:970px;top:500px;width:57px;height:25px;line-height:25px;color:#151515;font-size:12px;"><span style="color:#dd0000">大</span></div>
<div style="left:0px;top:525px;width:81px;height:27px;background:#91cfb6;"></div>
<div style="left:1px;top:526px;width:80px;height:25px;background:#21a075;"></div>
<div class="t" style="left:0px;top:526px;width:81px;height:25px;line-height:25px;color:#fff;font-size:12px;">瑞士超</div>
<div class="t" style="left:81px;top:526px;width:75px;height:25px;line-height:25px;color:#151515;font-size:12px;">25-08-03</div>
<div class="t" style="left:156px;top:526px;width:144px;height:25px;line-height:25px;color:#151515;font-size:12px;">温特图尔</div>
<div class="t" style="left:300px;top:526px;width:89px;height:25px;line-height:25px;color:#151515;font-size:12px;"><span style="color:#d02424">1-1</span>(0-1)</div>
<div class="t" style="left:389px;top:526px;width:39px;height:25px;line-height:25px;color:#151515;font-size:12px;">3-4</div>
<div class="t" style="left:428px;top:526px;width:86px;height:25px;line-height:25px;color:#151515;font-size:12px;"><span style="color:#138313">年青人</span></div>
<div class="t" style="left:514px;top:526px;width:48px;height:25px;line-height:25px;color:#151515;font-size:12px;">0.88</div>
<div class="t" style="left:562px;top:526px;width:83px;height:25px;line-height:25px;color:#151515;font-size:12px;">受一球</div>
<div class="t" style="left:645px;top:526px;width:51px;height:25px;line-height:25px;color:#151515;font-size:12px;">1.01</div>
<div class="t" style="left:696px;top:526px;width:56px;height:25px;line-height:25px;color:#151515;font-size:12px;">4.81</div>
<div class="t" style="left:752px;top:526px;width:70px;height:25px;line-height:25px;color:#151515;font-size:12px;">4.09</div>
<div class="t" style="left:822px;top:526px;width:72px;height:25px;line-height:25px;color:#151515;font-size:12px;">1.59</div>
<div class="t" style="left:894px;top:526px;width:38px;height:25px;line-height:25px;color:#151515;font-size:12px;"><span style="color:#138313">平</span></div>
<div class="t" style="left:932px;top:526px;width:38px;height:25px;line-height:25px;color:#151515;font-size:12px;"><span style="color:#0000bb">输</span></div>
<div class="t" style="left:970px;top:526px;width:57px;height:25px;line-height:25px;color:#151515;font-size:12px;"><span style="color:#0000bb">小</span></div>
<div style="left:0px;top:551px;width:81px;height:27px;background:#91cfb6;"></div>
<div style="left:1px;top:552px;width:80px;height:25px;background:#21a075;"></div>
<div class="t" style="left:0px;top:552px;width:81px;height:25px;line-height:25px;color:#fff;font-size:12px;">瑞士超</div>
<div class="t" style="left:81px;top:552px;width:75px;height:25px;line-height:25px;color:#151515;font-size:12px;">25-07-27</div>
<div class="t" style="left:156px;top:552px;width:144px;height:25px;line-height:25px;color:#151515;font-size:12px;"><span style="color:#138313">年青人</span></div>
<div class="t" style="left:300px;top:552px;width:89px;height:25px;line-height:25px;color:#151515;font-size:12px;"><span style="color:#d02424">3-1</span>(2-1)</div>
<div class="t" style="left:389px;top:552px;width:39px;height:25px;line-height:25px;color:#151515;font-size:12px;">8-2</div>
<div class="t" style="left:428px;top:552px;width:86px;height:25px;line-height:25px;color:#151515;font-size:12px;">塞尔维特<span class="mk">1</span></div>
<div class="t" style="left:514px;top:552px;width:48px;height:25px;line-height:25px;color:#151515;font-size:12px;">0.82</div>
<div class="t" style="left:562px;top:552px;width:83px;height:25px;line-height:25px;color:#151515;font-size:12px;">半/一</div>
<div class="t" style="left:645px;top:552px;width:51px;height:25px;line-height:25px;color:#151515;font-size:12px;">1.07</div>
<div class="t" style="left:696px;top:552px;width:56px;height:25px;line-height:25px;color:#151515;font-size:12px;">1.77</div>
<div class="t" style="left:752px;top:552px;width:70px;height:25px;line-height:25px;color:#151515;font-size:12px;">3.86</div>
<div class="t" style="left:822px;top:552px;width:72px;height:25px;line-height:25px;color:#151515;font-size:12px;">3.93</div>
<div class="t" style="left:894px;top:552px;width:38px;height:25px;line-height:25px;color:#151515;font-size:12px;"><span style="color:#dd0000">胜</span></div>
<div class="t" style="left:932px;top:552px;width:38px;height:25px;line-height:25px;color:#151515;font-size:12px;"><span style="color:#dd0000">赢</span></div>
<div class="t" style="left:970px;top:552px;width:57px;height:25px;line-height:25px;color:#151515;font-size:12px;"><span style="color:#dd0000">大</span></div>
<div style="left:0px;top:577px;width:81px;height:27px;background:#80d2d2;"></div>
<div style="left:1px;top:578px;width:80px;height:25px;background:#00a5a5;"></div>
<div class="t" style="left:0px;top:578px;width:81px;height:25px;line-height:25px;color:#fff;font-size:12px;">球会友谊</div>
<div class="t" style="left:81px;top:578px;width:75px;height:25px;line-height:25px;color:#151515;font-size:12px;">25-07-17</div>
<div class="t" style="left:156px;top:578px;width:144px;height:25px;line-height:25px;color:#151515;font-size:12px;">波鸿</div>
<div class="t" style="left:300px;top:578px;width:89px;height:25px;line-height:25px;color:#151515;font-size:12px;"><span style="color:#d02424">5-4</span>(1-4)</div>
<div class="t" style="left:389px;top:578px;width:39px;height:25px;line-height:25px;color:#151515;font-size:12px;">5-4</div>
<div class="t" style="left:428px;top:578px;width:86px;height:25px;line-height:25px;color:#151515;font-size:12px;"><span style="color:#138313">年青人</span></div>
<div class="t" style="left:514px;top:578px;width:48px;height:25px;line-height:25px;color:#151515;font-size:12px;">0.78</div>
<div class="t" style="left:562px;top:578px;width:83px;height:25px;line-height:25px;color:#151515;font-size:12px;">受平/半</div>
<div class="t" style="left:645px;top:578px;width:51px;height:25px;line-height:25px;color:#151515;font-size:12px;">1.04</div>
<div class="t" style="left:696px;top:578px;width:56px;height:25px;line-height:25px;color:#151515;font-size:12px;">2.82</div>
<div class="t" style="left:752px;top:578px;width:70px;height:25px;line-height:25px;color:#151515;font-size:12px;">3.73</div>
<div class="t" style="left:822px;top:578px;width:72px;height:25px;line-height:25px;color:#151515;font-size:12px;">2.19</div>
<div class="t" style="left:894px;top:578px;width:38px;height:25px;line-height:25px;color:#151515;font-size:12px;"><span style="color:#0000bb">负</span></div>
<div class="t" style="left:932px;top:578px;width:38px;height:25px;line-height:25px;color:#151515;font-size:12px;"><span style="color:#0000bb">输</span></div>
<div class="t" style="left:970px;top:578px;width:57px;height:25px;line-height:25px;color:#151515;font-size:12px;"><span style="color:#dd0000">大</span></div>
<div style="left:0px;top:603px;width:81px;height:27px;background:#80d2d2;"></div>
<div style="left:1px;top:604px;width:80px;height:25px;background:#00a5a5;"></div>
<div class="t" style="left:0px;top:604px;width:81px;height:25px;line-height:25px;color:#fff;font-size:12px;">球会友谊</div>
<div class="t" style="left:81px;top:604px;width:75px;height:25px;line-height:25px;color:#151515;font-size:12px;">25-07-16</div>
<div class="t" style="left:156px;top:604px;width:144px;height:25px;line-height:25px;color:#151515;font-size:12px;">哈德斯菲尔德(中)</div>
<div class="t" style="left:300px;top:604px;width:89px;height:25px;line-height:25px;color:#151515;font-size:12px;"><span style="color:#d02424">1-1</span>(0-1)</div>
<div class="t" style="left:389px;top:604px;width:39px;height:25px;line-height:25px;color:#151515;font-size:12px;">4-6</div>
<div class="t" style="left:428px;top:604px;width:86px;height:25px;line-height:25px;color:#151515;font-size:12px;"><span style="color:#138313">年青人</span></div>
<div class="t" style="left:514px;top:604px;width:48px;height:25px;line-height:25px;color:#151515;font-size:12px;">0.80</div>
<div class="t" style="left:562px;top:604px;width:83px;height:25px;line-height:25px;color:#151515;font-size:12px;">受一球</div>
<div class="t" style="left:645px;top:604px;width:51px;height:25px;line-height:25px;color:#151515;font-size:12px;">1.02</div>
<div class="t" style="left:696px;top:604px;width:56px;height:25px;line-height:25px;color:#151515;font-size:12px;">4.81</div>
<div class="t" style="left:752px;top:604px;width:70px;height:25px;line-height:25px;color:#151515;font-size:12px;">3.93</div>
<div class="t" style="left:822px;top:604px;width:72px;height:25px;line-height:25px;color:#151515;font-size:12px;">1.56</div>
<div class="t" style="left:894px;top:604px;width:38px;height:25px;line-height:25px;color:#151515;font-size:12px;"><span style="color:#138313">平</span></div>
<div class="t" style="left:932px;top:604px;width:38px;height:25px;line-height:25px;color:#151515;font-size:12px;"><span style="color:#0000bb">输</span></div>
<div class="t" style="left:970px;top:604px;width:57px;height:25px;line-height:25px;color:#151515;font-size:12px;"><span style="color:#0000bb">小</span></div>
<div style="left:0px;top:629px;width:81px;height:27px;background:#80d2d2;"></div>
<div style="left:1px;top:630px;width:80px;height:25px;background:#00a5a5;"></div>
<div class="t" style="left:0px;top:630px;width:81px;height:25px;line-height:25px;color:#fff;font-size:12px;">球会友谊</div>
<div class="t" style="left:81px;top:630px;width:75px;height:25px;line-height:25px;color:#151515;font-size:12px;">25-07-10</div>
<div class="t" style="left:156px;top:630px;width:144px;height:25px;line-height:25px;color:#151515;font-size:12px;">布拉格斯巴达(中)</div>
<div class="t" style="left:300px;top:630px;width:89px;height:25px;line-height:25px;color:#151515;font-size:12px;"><span style="color:#d02424">3-1</span>(2-1)</div>
<div class="t" style="left:389px;top:630px;width:39px;height:25px;line-height:25px;color:#151515;font-size:12px;">2-2</div>
<div class="t" style="left:428px;top:630px;width:86px;height:25px;line-height:25px;color:#151515;font-size:12px;"><span style="color:#138313">年青人</span></div>
<div class="t" style="left:514px;top:630px;width:48px;height:25px;line-height:25px;color:#151515;font-size:12px;">0.98</div>
<div class="t" style="left:562px;top:630px;width:83px;height:25px;line-height:25px;color:#151515;font-size:12px;">平/半</div>
<div class="t" style="left:645px;top:630px;width:51px;height:25px;line-height:25px;color:#151515;font-size:12px;">0.84</div>
<div class="t" style="left:696px;top:630px;width:56px;height:25px;line-height:25px;color:#151515;font-size:12px;">2.24</div>
<div class="t" style="left:752px;top:630px;width:70px;height:25px;line-height:25px;color:#151515;font-size:12px;">3.59</div>
<div class="t" style="left:822px;top:630px;width:72px;height:25px;line-height:25px;color:#151515;font-size:12px;">2.69</div>
<div class="t" style="left:894px;top:630px;width:38px;height:25px;line-height:25px;color:#151515;font-size:12px;"><span style="color:#0000bb">负</span></div>
<div class="t" style="left:932px;top:630px;width:38px;height:25px;line-height:25px;color:#151515;font-size:12px;"><span style="color:#0000bb">输</span></div>
<div class="t" style="left:970px;top:630px;width:57px;height:25px;line-height:25px;color:#151515;font-size:12px;"><span style="color:#dd0000">大</span></div>
<div style="left:0px;top:655px;width:81px;height:27px;background:#80d2d2;"></div>
<div style="left:1px;top:656px;width:80px;height:25px;background:#00a5a5;"></div>
<div class="t" style="left:0px;top:656px;width:81px;height:25px;line-height:25px;color:#fff;font-size:12px;">球会友谊</div>
<div class="t" style="left:81px;top:656px;width:75px;height:25px;line-height:25px;color:#151515;font-size:12px;">25-07-04</div>
<div class="t" style="left:156px;top:656px;width:144px;height:25px;line-height:25px;color:#151515;font-size:12px;"><span style="color:#138313">年青人(中)</span></div>
<div class="t" style="left:300px;top:656px;width:89px;height:25px;line-height:25px;color:#151515;font-size:12px;"><span style="color:#d02424">4-1</span>(2-1)</div>
<div class="t" style="left:389px;top:656px;width:39px;height:25px;line-height:25px;color:#151515;font-size:12px;">8-1</div>
<div class="t" style="left:428px;top:656px;width:86px;height:25px;line-height:25px;color:#151515;font-size:12px;">克里恩斯</div>
<div class="t" style="left:514px;top:656px;width:48px;height:25px;line-height:25px;color:#151515;font-size:12px;">0.74</div>
<div class="t" style="left:562px;top:656px;width:83px;height:25px;line-height:25px;color:#151515;font-size:12px;">三球</div>
<div class="t" style="left:645px;top:656px;width:51px;height:25px;line-height:25px;color:#151515;font-size:12px;">1.02</div>
<div class="t" style="left:696px;top:656px;width:56px;height:25px;line-height:25px;color:#151515;font-size:12px;">1.08</div>
<div class="t" style="left:752px;top:656px;width:70px;height:25px;line-height:25px;color:#151515;font-size:12px;">10.32</div>
<div class="t" style="left:822px;top:656px;width:72px;height:25px;line-height:25px;color:#151515;font-size:12px;">17.34</div>
<div class="t" style="left:894px;top:656px;width:38px;height:25px;line-height:25px;color:#151515;font-size:12px;"><span style="color:#dd0000">胜</span></div>
<div class="t" style="left:932px;top:656px;width:38px;height:25px;line-height:25px;color:#151515;font-size:12px;"><span style="color:#138313">走</span></div>
<div class="t" style="left:970px;top:656px;width:57px;height:25px;line-height:25px;color:#151515;font-size:12px;"><span style="color:#dd0000">大</span></div>
<div style="left:0px;top:681px;width:81px;height:27px;background:#91cfb6;"></div>
<div style="left:1px;top:682px;width:80px;height:25px;background:#21a075;"></div>
<div class="t" style="left:0px;top:682px;width:81px;height:25px;line-height:25px;color:#fff;font-size:12px;">瑞士超</div>
<div class="t" style="left:81px;top:682px;width:75px;height:25px;line-height:25px;color:#151515;font-size:12px;">25-05-25</div>
<div class="t" style="left:156px;top:682px;width:144px;height:25px;line-height:25px;color:#151515;font-size:12px;">卢加诺</div>
<div class="t" style="left:300px;top:682px;width:89px;height:25px;line-height:25px;color:#151515;font-size:12px;"><span style="color:#d02424">1-1</span>(0-0)</div>
<div class="t" style="left:389px;top:682px;width:39px;height:25px;line-height:25px;color:#151515;font-size:12px;">3-1</div>
<div class="t" style="left:428px;top:682px;width:86px;height:25px;line-height:25px;color:#151515;font-size:12px;"><span style="color:#138313">年青人</span></div>
<div class="t" style="left:514px;top:682px;width:48px;height:25px;line-height:25px;color:#151515;font-size:12px;">0.81</div>
<div class="t" style="left:562px;top:682px;width:83px;height:25px;line-height:25px;color:#151515;font-size:12px;">平手</div>
<div class="t" style="left:645px;top:682px;width:51px;height:25px;line-height:25px;color:#151515;font-size:12px;">1.08</div>
<div class="t" style="left:696px;top:682px;width:56px;height:25px;line-height:25px;color:#151515;font-size:12px;">2.49</div>
<div class="t" style="left:752px;top:682px;width:70px;height:25px;line-height:25px;color:#151515;font-size:12px;">3.86</div>
<div class="t" style="left:822px;top:682px;width:72px;height:25px;line-height:25px;color:#151515;font-size:12px;">2.39</div>
<div class="t" style="left:894px;top:682px;width:38px;height:25px;line-height:25px;color:#151515;font-size:12px;"><span style="color:#138313">平</span></div>
<div class="t" style="left:932px;top:682px;width:38px;height:25px;line-height:25px;color:#151515;font-size:12px;"><span style="color:#138313">走</span></div>
<div class="t" style="left:970px;top:682px;width:57px;height:25px;line-height:25px;color:#151515;font-size:12px;"><span style="color:#0000bb">小</span></div>
<div class="t" style="left:0px;top:708px;width:1028px;height:25px;line-height:25px;color:#151515;font-size:12px;letter-spacing:0.18px">近<span style="color:#d02424">10</span>场,胜3平4负3, 胜率:<span style="color:#d02424">30%</span> 让胜率:<span style="color:#d02424">11.1%</span> 大率:<span style="color:#d02424">55.6%</span> 单率:<span style="color:#d02424">40%</span></div>
<div class="sel" style="left:559px;top:58px;width:60px;height:19px"><div class="st" style="top:0px;font-family:'Liberation Sans',sans-serif;font-size:13.5px;line-height:17px">Crow*</div><svg width="10" height="7" style="right:3px;top:5px"><polyline points="1.2,1.2 5,4.8 8.8,1.2" fill="none" stroke="#000" stroke-width="2.1"/></svg></div><div class="sel" style="left:627px;top:58px;width:51px;height:19px"><div class="st" style="top:0px;font-family:'Liberation Sans',sans-serif;font-size:13px;line-height:17px">终指</div><svg width="10" height="7" style="right:3px;top:5px"><polyline points="1.2,1.2 5,4.8 8.8,1.2" fill="none" stroke="#000" stroke-width="2.1"/></svg></div><div class="sel" style="left:739px;top:58px;width:69px;height:19px"><div class="st" style="top:0px;font-family:'Liberation Sans',sans-serif;font-size:13px;line-height:17px">平均值</div><svg width="10" height="7" style="right:3px;top:5px"><polyline points="1.2,1.2 5,4.8 8.8,1.2" fill="none" stroke="#000" stroke-width="2.1"/></svg></div><div class="sel" style="left:816px;top:58px;width:51px;height:19px"><div class="st" style="top:0px;font-family:'Liberation Sans',sans-serif;font-size:13px;line-height:17px">终指</div><svg width="10" height="7" style="right:3px;top:5px"><polyline points="1.2,1.2 5,4.8 8.8,1.2" fill="none" stroke="#000" stroke-width="2.1"/></svg></div><div class="sel" style="left:937px;top:58px;width:51px;height:19px"><div class="st" style="top:0px;font-family:'Liberation Sans',sans-serif;font-size:13px;line-height:17px">全场</div><svg width="10" height="7" style="right:3px;top:5px"><polyline points="1.2,1.2 5,4.8 8.8,1.2" fill="none" stroke="#000" stroke-width="2.1"/></svg></div>
<div class="sel" style="left:545px;top:409px;width:61px;height:19px"><div class="st" style="top:0px;font-family:'Liberation Sans',sans-serif;font-size:13.5px;line-height:17px">Crow*</div><svg width="10" height="7" style="right:3px;top:5px"><polyline points="1.2,1.2 5,4.8 8.8,1.2" fill="none" stroke="#000" stroke-width="2.1"/></svg></div><div class="sel" style="left:614px;top:409px;width:51px;height:19px"><div class="st" style="top:0px;font-family:'Liberation Sans',sans-serif;font-size:13px;line-height:17px">终指</div><svg width="10" height="7" style="right:3px;top:5px"><polyline points="1.2,1.2 5,4.8 8.8,1.2" fill="none" stroke="#000" stroke-width="2.1"/></svg></div><div class="sel" style="left:732px;top:409px;width:69px;height:19px"><div class="st" style="top:0px;font-family:'Liberation Sans',sans-serif;font-size:13px;line-height:17px">平均值</div><svg width="10" height="7" style="right:3px;top:5px"><polyline points="1.2,1.2 5,4.8 8.8,1.2" fill="none" stroke="#000" stroke-width="2.1"/></svg></div><div class="sel" style="left:808px;top:409px;width:51px;height:19px"><div class="st" style="top:0px;font-family:'Liberation Sans',sans-serif;font-size:13px;line-height:17px">终指</div><svg width="10" height="7" style="right:3px;top:5px"><polyline points="1.2,1.2 5,4.8 8.8,1.2" fill="none" stroke="#000" stroke-width="2.1"/></svg></div><div class="sel" style="left:935px;top:409px;width:51px;height:19px"><div class="st" style="top:0px;font-family:'Liberation Sans',sans-serif;font-size:13px;line-height:17px">全场</div><svg width="10" height="7" style="right:3px;top:5px"><polyline points="1.2,1.2 5,4.8 8.8,1.2" fill="none" stroke="#000" stroke-width="2.1"/></svg></div>
</body></html>
